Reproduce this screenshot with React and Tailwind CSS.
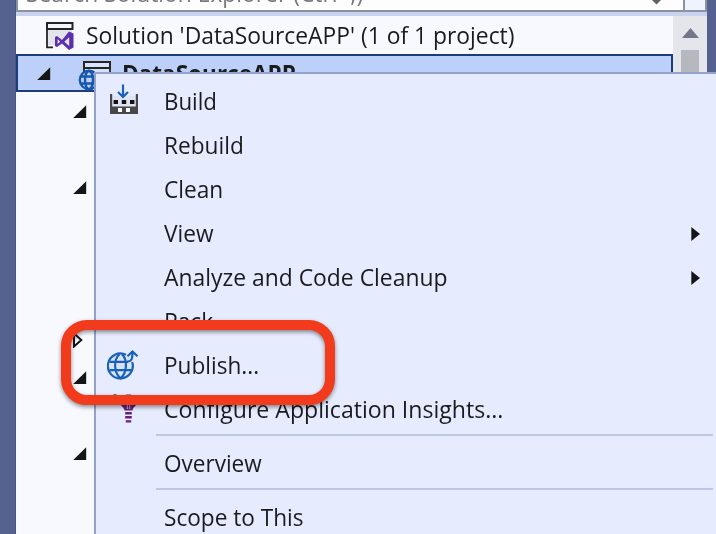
import React from "react";

function Expanded({ className = "" }) {
  return (
    <svg className={className} width="14" height="14" viewBox="0 0 14 14">
      <path d="M13.2 .2V13H.2z" fill="#151518" />
    </svg>
  );
}

function WindowIcon() {
  return (
    <svg width="30" height="30" viewBox="0 0 30 30" className="mt-0.5 shrink-0">
      <path d="M2 9H27V24H2z" fill="#e3e5ec" />
      <path d="M2 2H27.5V8H2z" fill="#f4f6fc" stroke="#252526" strokeWidth="2" />
      <path d="M2 8V26.3H8" fill="none" stroke="#252526" strokeWidth="1.8" />
      <path d="M10 16L12 15L17 19L24 10.5L28.5 12.5V26.5L24 29L17 22.5L12 26L10 25zM12.6 18V23L15.2 20.7zM19.3 20.7L24.2 25V16.2z" fill="#5b2fae" fillRule="evenodd" />
    </svg>
  );
}

function ProjectIcon() {
  return (
    <svg width="36" height="32" viewBox="0 0 36 32" className="shrink-0">
      <path d="M6 8H32V30H6z" fill="#d6e0f7" />
      <path d="M6 2H32V8H6z" fill="#d8e4fb" stroke="#252526" strokeWidth="2" />
      <path d="M6 8V12M32 8V14" stroke="#252526" strokeWidth="1.8" />
      <circle cx="11" cy="20" r="10" fill="#bdd0f7" />
      <g fill="none" stroke="#1558ad" strokeWidth="2.4">
        <circle cx="11" cy="20" r="9.2" />
        <ellipse cx="11" cy="20" rx="4" ry="9" />
        <path d="M2.5 16.5H19.5M2.5 23.5H19.5" />
      </g>
    </svg>
  );
}

function BuildIcon() {
  return (
    <svg width="30" height="32" viewBox="0 0 30 32" className="mb-1 ml-px">
      <path d="M2.5 12H27.5V28H2.5z" fill="#dfe3f2" />
      <path d="M1 10H3.2V22.5H26.8V10H29V30H1zM9 24V28H13V24zM17 24V28H21V24z" fill="#48484b" fillRule="evenodd" />
      <path d="M9 24H13V28H9zM17 24H21V28H17z" fill="#fff" />
      <path d="M4.6 16H9V20H4.6zM12.8 16H17.2V20H12.8zM21 16H25.4V20H21z" fill="#111113" />
      <path d="M14 .5V12.5M9 8L14 13L19 8" fill="none" stroke="#1761bc" strokeWidth="2.2" />
    </svg>
  );
}

function PublishIcon() {
  return (
    <svg width="32" height="32" viewBox="0 0 32 32" className="-ml-px mb-[3px]">
      <circle cx="13.5" cy="17" r="12" fill="#d9e3f8" />
      <g fill="none" stroke="#1761b8" strokeWidth="2.2">
        <path d="M19 5.8A12.5 12.5 0 1 0 25.2 13" />
        <path d="M15 5.2C20.5 10.5 20.5 23.5 13.5 29.3C6.5 23.5 6.5 10.5 12.5 5.2M2.5 12.8H21M2.5 21.2H24.5" />
        <path d="M20.5 12.5C24.5 12.5 25.5 10 25.5 3M20.5 7.2L25.5 2.4L30.5 7.2" />
      </g>
    </svg>
  );
}

function InsightsIcon() {
  return (
    <svg width="32" height="32" viewBox="0 0 32 32" className="ml-0.5">
      <path d="M3.5 0H6.5V3H3.5z" fill="#3b8d3d" />
      <path d="M9.5 8C9.5 -2 27.5 -2 27.5 8C27 12 23.5 12 22.5 16.5H14.5C13.5 12 10 12 9.5 8z" fill="#67217a" />
      <path d="M15 9L17.3 10.5V15M22 9L19.7 10.5V15" fill="none" stroke="#cdbfdf" strokeWidth=".9" />
      <path d="M15.2 18H21.8V20.4H15.2zM15.2 22H21.8V24.4H15.2zM15.8 26.2H21.2V28.6H15.8z" fill="#67217a" />
    </svg>
  );
}

function MenuRow({ label, icon, submenu, fit }) {
  return (
    <div className="flex h-11 shrink-0 items-center">
      <div className="flex w-17 shrink-0 pl-3">{icon}</div>
      <span className={"mb-px origin-left whitespace-nowrap leading-none " + fit}>{label}</span>
      {submenu && (
        <svg className="mb-px ml-auto mr-4" width="9" height="14" viewBox="0 0 9 14">
          <path d="M.3 0L9 7L.3 14z" fill="#151518" />
        </svg>
      )}
    </div>
  );
}

function Separator() {
  return (
    <div className="flex h-2.5 shrink-0 pl-15 pr-[3px] pt-0.5">
      <div className="h-0.5 grow bg-[#bdc6e6]" />
    </div>
  );
}

export default function App() {
  return (
    <div className="relative flex h-[534px] w-[716px] overflow-hidden bg-[#55628f] font-['Open_Sans',sans-serif] text-[23px] text-[#1b1b1f]">
      <div className="w-4 shrink-0 border-r border-[#475580]" />
      <div className="flex w-[691px] shrink-0 flex-col bg-[#f7f9fe]">
        <div className="flex h-3 shrink-0 overflow-hidden border-b-2 border-l-2 border-[#8993a5] bg-[#fdfdfe]">
          <div className="-mt-[19px] w-[633px] pl-2 leading-6 text-[#77787e]">
            <span className="inline-block origin-left scale-x-[.992] whitespace-nowrap">Search Solution Explorer (Ctrl+;)</span>
          </div>
          <svg width="12" height="5" viewBox="0 0 12 5"><path d="M1 0H10L5.5 4.5z" fill="#606064" /></svg>
          <div className="ml-auto w-6 border-x-2 border-[#8993a5] bg-[#eff3fd]" />
        </div>
        <div className="h-1 shrink-0 bg-[#c9d3ee]" />
        <div className="flex grow">
          <div className="w-[657px] shrink-0">
            <div className="flex h-[38px] items-center pl-[29px]">
              <WindowIcon />
              <span className="ml-[11px] mt-px origin-left scale-x-[.993] whitespace-nowrap leading-none">Solution 'DataSourceAPP' (1 of 1 project)</span>
            </div>
            <div className="flex h-[38px] items-start border-2 border-[#1d3d78] bg-[#bdd0f9]">
              <Expanded className="ml-[19px] mt-[11px]" />
              <div className="ml-[27px] mt-1"><ProjectIcon /></div>
              <span className="ml-2 mt-1.5 origin-left scale-x-[.98] whitespace-nowrap font-bold leading-none">DataSourceAPP</span>
            </div>
            <div className="pl-[57px]">
              <Expanded className="mt-[13px]" />
              <Expanded className="mt-[62px]" />
              <svg className="-ml-px mt-[137px]" width="14" height="16" viewBox="0 0 14 16">
                <path d="M2 1.5V14.5L9.3 8z" fill="none" stroke="#151518" strokeWidth="2" />
              </svg>
              <Expanded className="mt-[23px]" />
              <Expanded className="mt-[62px]" />
            </div>
          </div>
          <div className="flex grow flex-col items-center bg-[#e5e6eb] pt-3">
            <svg width="17" height="10" viewBox="0 0 17 10"><path d="M0 10L8.5 0L17 10z" fill="#737789" /></svg>
            <div className="mt-3 w-[18px] grow bg-[#b6b8bf]" />
          </div>
        </div>
      </div>

      <div className="absolute left-[94px] top-[72px] flex h-[462px] w-[622px] flex-col overflow-hidden border-l-2 border-t-2 border-[#93a2ca] bg-[#e6ebfe] pt-1.5">
        <MenuRow label="Build" icon={<BuildIcon />} fit="scale-x-[.97]" />
        <MenuRow label="Rebuild" fit="scale-x-[.985]" />
        <MenuRow label="Clean" fit="scale-x-[.985]" />
        <MenuRow label="View" submenu fit="scale-x-[.985]" />
        <MenuRow label="Analyze and Code Cleanup" submenu fit="scale-x-[.995]" />
        <MenuRow label="Pack" fit="scale-x-[.99]" />
        <MenuRow label="Publish..." icon={<PublishIcon />} fit="scale-x-[.982]" />
        <MenuRow label="Configure Application Insights..." icon={<InsightsIcon />} fit="scale-x-[1.004]" />
        <Separator />
        <MenuRow label="Overview" fit="scale-x-[.98]" />
        <Separator />
        <MenuRow label="Scope to This" fit="scale-x-[.983]" />
      </div>

      <div className="absolute left-[61px] top-80 h-[85px] w-[274px] rounded-[26px] border-10 border-[#f23a1d] drop-shadow-[0_2px_2px_rgba(0,0,0,0.45)]" />
    </div>
  );
}
